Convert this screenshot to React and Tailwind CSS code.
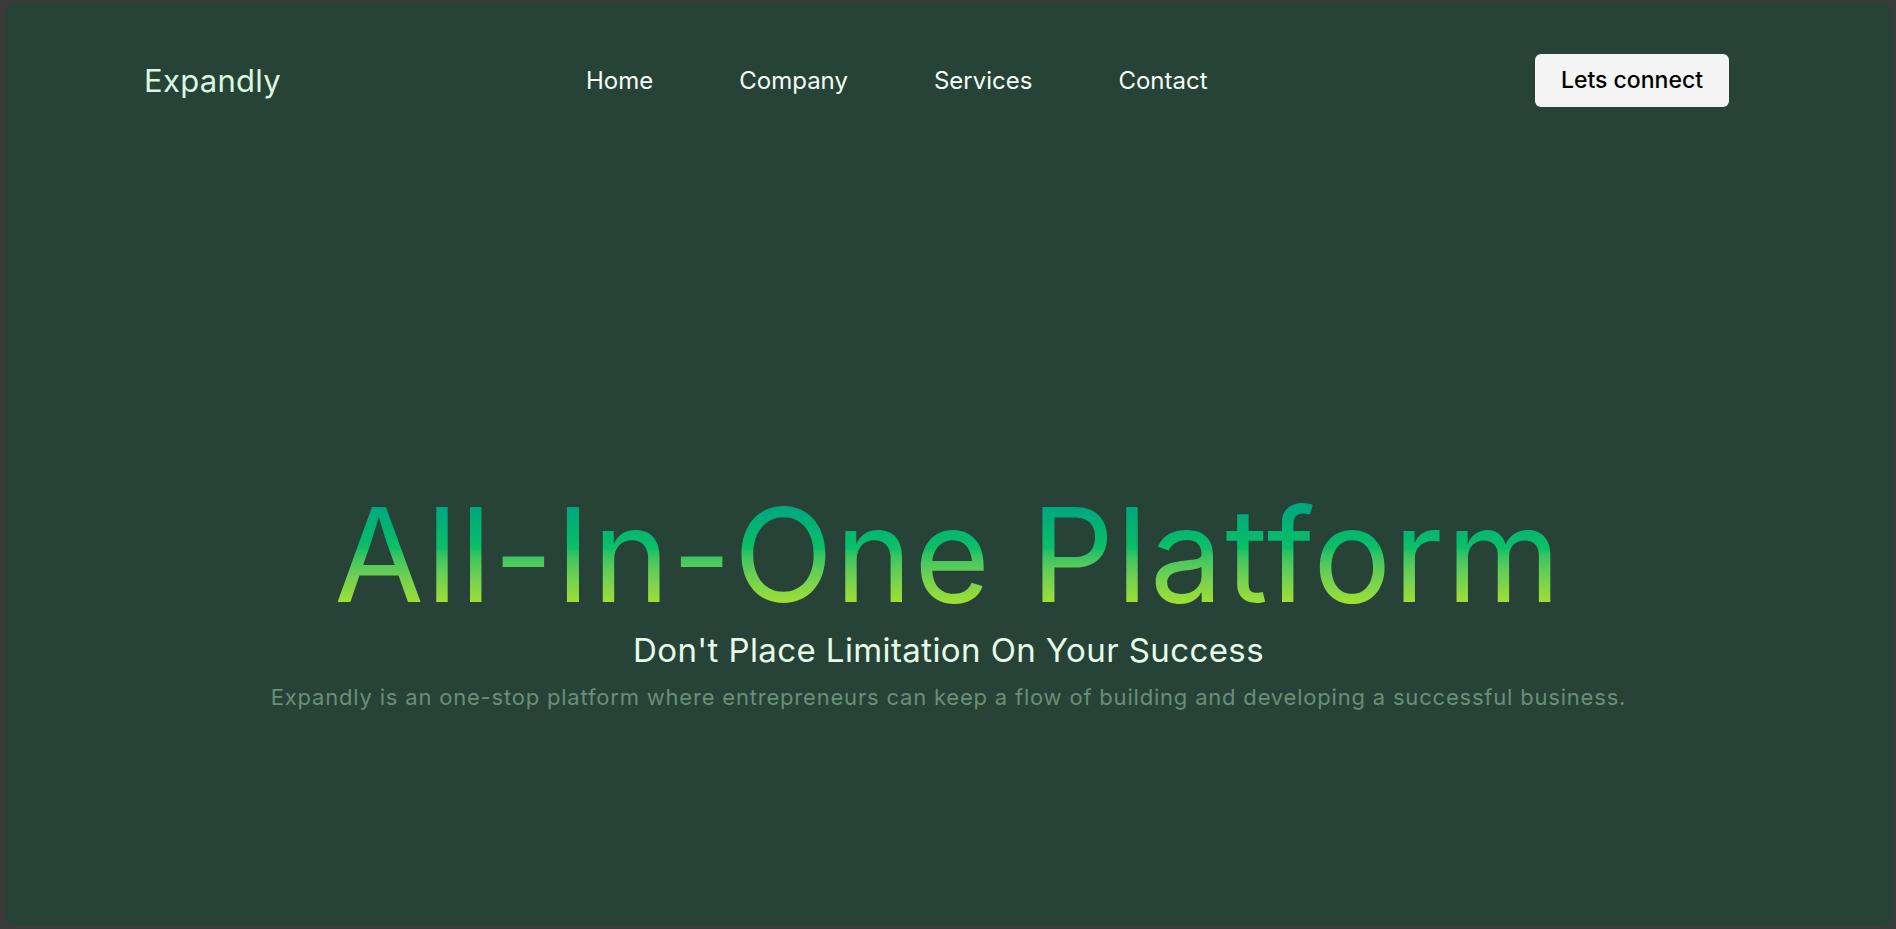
import React from 'react';

const links = ['Home', 'Company', 'Services', 'Contact'];

const App = () => {
  return (
    <div className="h-[929px] w-full bg-[#3b3b3b] pt-[3px] pb-[3px] pl-[5px] pr-[4px] overflow-hidden font-['Inter','Liberation_Sans',sans-serif]">
      <div className="h-full w-full rounded-[10px] bg-[#274337] flex flex-col">
        {/* header */}
        <header className="mt-[51px] h-[53px] flex items-center pl-[139px] pr-[163px]">
          <div className="w-[442px] text-[31px] leading-none text-[#dcf6e0] tracking-[0.3px]">Expandly</div>
          <nav className="flex items-center gap-[86px]">
            {links.map((l) => (
              <a key={l} href="#" className="text-[24px] leading-none text-[#f3fff6]">
                {l}
              </a>
            ))}
          </nav>
          <button className="ml-auto w-[194px] h-[53px] rounded-[6px] bg-[#f4f4f4] text-[23px] font-medium text-black leading-none">
            Lets connect
          </button>
        </header>

        {/* hero */}
        <main className="mt-[383px] flex flex-col items-center text-center">
          <h1 className="text-[130px] leading-none font-normal tracking-[2.2px] bg-gradient-to-b from-[#009c85] via-[#0cc066] via-45% to-[#a6e126] to-90% bg-clip-text text-transparent">
            All-In-One Platform
          </h1>
          <h2 className="mt-[14px] text-[33px] leading-none tracking-[0.4px] text-[#e6fbe8]">
            Don't Place Limitation On Your Success
          </h2>
          <p className="mt-[19px] text-[22px] leading-none tracking-[0.8px] text-[#6a8e77]">
            Expandly is an one-stop platform where entrepreneurs can keep a flow of building and developing a successful business.
          </p>
        </main>
      </div>
    </div>
  );
};

export default App;
